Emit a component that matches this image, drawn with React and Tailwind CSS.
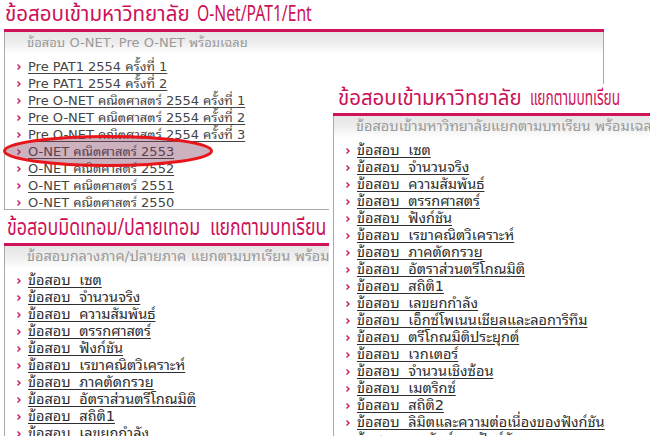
import React, { useLayoutEffect, useRef, useState } from "react";

const titleFont = {
  fontFamily: "'Noto Sans Thai', 'Noto Sans', 'DejaVu Sans', sans-serif",
};
const bodyFont = {
  fontFamily: "'DejaVu Sans', 'Noto Sans Thai Looped', Loma, Waree, 'Noto Sans Thai', sans-serif",
};

const onet = [
  "Pre PAT1 2554 ครั้งที่ 1",
  "Pre PAT1 2554 ครั้งที่ 2",
  "Pre O-NET คณิตศาสตร์ 2554 ครั้งที่ 1",
  "Pre O-NET คณิตศาสตร์ 2554 ครั้งที่ 2",
  "Pre O-NET คณิตศาสตร์ 2554 ครั้งที่ 3",
  "O-NET คณิตศาสตร์ 2553",
  "O-NET คณิตศาสตร์ 2552",
  "O-NET คณิตศาสตร์ 2551",
  "O-NET คณิตศาสตร์ 2550",
];

const midterm = [
  "เซต",
  "จำนวนจริง",
  "ความสัมพันธ์",
  "ตรรกศาสตร์",
  "ฟังก์ชัน",
  "เรขาคณิตวิเคราะห์",
  "ภาคตัดกรวย",
  "อัตราส่วนตรีโกณมิติ",
  "สถิติ1",
  "เลขยกกำลัง",
];

const entrance = [
  "เซต",
  "จำนวนจริง",
  "ความสัมพันธ์",
  "ตรรกศาสตร์",
  "ฟังก์ชัน",
  "เรขาคณิตวิเคราะห์",
  "ภาคตัดกรวย",
  "อัตราส่วนตรีโกณมิติ",
  "สถิติ1",
  "เลขยกกำลัง",
  "เอ็กซ์โพเนนเชียลและลอการิทึม",
  "ตรีโกณมิติประยุกต์",
  "เวกเตอร์",
  "จำนวนเชิงซ้อน",
  "เมตริกซ์",
  "สถิติ2",
  "ลิมิตและความต่อเนื่องของฟังก์ชัน",
  "อนุพันธ์ของฟังก์ชัน",
];

// Condensed heading segment: the text is squeezed horizontally so that it
// fills the width of its box (the heading typeface is a narrow one).
function Squeeze({ className, children }) {
  const box = useRef(null);
  const inner = useRef(null);
  const [k, setK] = useState(1);
  useLayoutEffect(() => {
    const fit = () => {
      if (!box.current || !inner.current) return;
      const natural = inner.current.offsetWidth;
      if (natural > 0) setK(box.current.clientWidth / natural);
    };
    fit();
    if (document.fonts && document.fonts.ready) document.fonts.ready.then(fit);
  }, []);
  return (
    <span ref={box} className={`inline-block shrink-0 whitespace-nowrap ${className}`}>
      <span
        ref={inner}
        className="inline-block origin-left"
        style={{ transform: `scaleX(${k})` }}
      >
        {children}
      </span>
    </span>
  );
}

function Bullet() {
  return (
    <svg width="4" height="6" viewBox="0 0 4 6" className="shrink-0">
      <path d="M0.5 0.5 L3 3 L0.5 5.5" fill="none" stroke="#c8175a" strokeWidth="1.4" />
    </svg>
  );
}

function Panel({ heading, subtitle, items, large = false }) {
  return (
    <div className="flex flex-col h-full">
      {heading}
      <div className="ml-[4px] h-[3px] bg-[#cf1259]" />
      <div className="ml-[4px] flex-1 border-l border-r border-b border-[#a9a9a9] bg-white overflow-hidden">
        <div
          className={`h-[22px] pl-[22px] flex items-center bg-gradient-to-b from-[#e6e6e6] via-[#eeeeee] to-white text-[#9a9a9a] whitespace-nowrap ${
            large ? "text-[14.5px]" : "text-[13px]"
          }`}
          style={bodyFont}
        >
          {subtitle}
        </div>
        <ul className="pt-[4px]" style={bodyFont}>
          {items.map((t) => (
            <li key={t} className="h-[17px] flex items-center gap-[7px] pl-[12px] whitespace-nowrap">
              <Bullet />
              <a
                className={`leading-[17px] underline underline-offset-2 ${
                  large
                    ? "text-[14.5px] text-[#2e2e2e] decoration-[#2e2e2e] [word-spacing:4px]"
                    : "text-[13px] text-[#444] decoration-[#444]"
                }`}
              >
                {t}
              </a>
            </li>
          ))}
        </ul>
      </div>
    </div>
  );
}

export default function App() {
  return (
    <div className="relative w-[650px] h-[436px] bg-white overflow-hidden">
      {/* O-Net / PAT1 / Ent window */}
      <div className="absolute left-0 top-0 w-[604px] h-[210px]">
        <Panel
          heading={
            <div
              className="h-[29px] pl-[5px] pt-[2px] flex gap-[7px] text-[21px] leading-[26px] text-[#cc1157]"
              style={titleFont}
            >
              <Squeeze className="w-[185px]">ข้อสอบเข้ามหาวิทยาลัย</Squeeze>
              <Squeeze className="w-[115px]">O-Net/PAT1/Ent</Squeeze>
            </div>
          }
          subtitle="ข้อสอบ O-NET, Pre O-NET พร้อมเฉลย"
          items={onet}
        />
        <svg
          className="absolute left-[2px] top-[134px]"
          width="214"
          height="34"
          viewBox="0 0 214 34"
        >
          <ellipse cx="106" cy="17" rx="103.5" ry="14.5" fill="rgba(128,60,92,0.4)" stroke="#e8161b" strokeWidth="3" />
        </svg>
      </div>

      {/* Midterm / final window */}
      <div className="absolute left-0 top-[214px] w-[334px] h-[240px]">
        <Panel
          heading={
            <div
              className="h-[29px] pl-[7px] pt-[1px] flex gap-[10px] text-[23px] leading-[27px] text-[#cc1157]"
              style={titleFont}
            >
              <Squeeze className="w-[193px]">ข้อสอบมิดเทอม/ปลายเทอม</Squeeze>
              <Squeeze className="w-[116px]">แยกตามบทเรียน</Squeeze>
            </div>
          }
          subtitle="ข้อสอบกลางภาค/ปลายภาค แยกตามบทเรียน พร้อมเฉลย"
          items={midterm.map((t) => "ข้อสอบ " + t)}
          large
        />
      </div>

      {/* Entrance by chapter window */}
      <div className="absolute left-[329px] top-[84px] w-[340px] h-[380px] bg-white">
        <Panel
          heading={
            <div
              className="h-[29px] pl-[9px] pt-[2px] flex gap-[8px] text-[21px] leading-[26px] text-[#cc1157]"
              style={titleFont}
            >
              <Squeeze className="w-[184px]">ข้อสอบเข้ามหาวิทยาลัย</Squeeze>
              <Squeeze className="w-[90px]">แยกตามบทเรียน</Squeeze>
            </div>
          }
          subtitle="ข้อสอบเข้ามหาวิทยาลัยแยกตามบทเรียน พร้อมเฉลย"
          items={entrance.map((t) => "ข้อสอบ " + t)}
          large
        />
      </div>
    </div>
  );
}
